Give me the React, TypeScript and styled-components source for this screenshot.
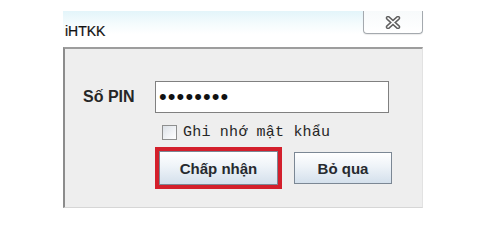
import React from "react"
import styled, { createGlobalStyle } from "styled-components"

const GlobalStyle = createGlobalStyle`
  html, body {
    margin: 0;
    padding: 0;
    background: #ffffff;
  }
  body {
    font-family: "Liberation Sans", Arial, sans-serif;
  }
`

const Window = styled.div`
  margin: 11px 0 0 63px;
  width: 360px;
`

const TitleBar = styled.div`
  height: 36px;
  display: flex;
  align-items: flex-start;
  justify-content: space-between;
  background: linear-gradient(180deg, #e3f5fa 0%, #f4fbfd 35%, #ffffff 65%);
`

const Title = styled.span`
  margin: 13px 0 0 2px;
  font-size: 14px;
  line-height: 14px;
  color: #111111;
  -webkit-text-stroke: 0.2px #111111;
`

const CloseButton = styled.div`
  width: 58px;
  height: 22px;
  display: flex;
  align-items: center;
  justify-content: center;
  border: 1px solid #a4a9ae;
  border-top: none;
  border-radius: 0 0 4px 4px;
  background: linear-gradient(180deg, #f7fafb 0%, #ffffff 100%);
  box-shadow: 0 1px 1px rgba(0, 0, 0, 0.08);
`

const Panel = styled.div`
  height: 161px;
  box-sizing: border-box;
  background: #eeeeee;
  border-top: 2px solid #9d9d9d;
  border-left: 2px solid #8c8c8c;
  border-right: 1px solid #e2e2e2;
  border-bottom: 1px solid #d6d6d6;
  padding: 32px 0 0 18px;
  display: flex;
  flex-direction: column;
`

const FieldRow = styled.div`
  display: flex;
  align-items: center;
`

const Label = styled.span`
  width: 72px;
  font-size: 16px;
  font-weight: bold;
  color: #262626;
`

const PinBox = styled.div`
  width: 234px;
  height: 32px;
  box-sizing: border-box;
  border: 1px solid #808080;
  background: #ffffff;
  display: flex;
  align-items: center;
  padding-left: 3px;
`

const Bullets = styled.span`
  font-size: 22px;
  line-height: 22px;
  letter-spacing: 1.1px;
  color: #111111;
  margin-top: -1px;
`

const CheckRow = styled.div`
  display: flex;
  align-items: center;
  margin: 12px 0 0 79px;
  height: 15px;
`

const CheckBox = styled.span`
  width: 15px;
  height: 15px;
  box-sizing: border-box;
  border: 1px solid #8e8f8f;
  background: linear-gradient(135deg, #dce1e7 0%, #f2f4f7 60%, #ffffff 100%);
  margin-right: 6px;
`

const CheckLabel = styled.span`
  font-family: "Liberation Mono", "Courier New", monospace;
  font-size: 15px;
  letter-spacing: 0.2px;
  color: #262626;
`

const ButtonRow = styled.div`
  display: flex;
  align-items: center;
  gap: 12px;
  margin: 7px 0 0 72px;
`

const FocusRing = styled.div`
  border: 4px solid #d31f2b;
  display: flex;
`

const Button = styled.div<{ $w: number; $h: number }>`
  width: ${({ $w }) => $w}px;
  height: ${({ $h }) => $h}px;
  box-sizing: border-box;
  display: flex;
  align-items: center;
  justify-content: center;
  border: 1px solid #7b8794;
  background: linear-gradient(180deg, #ffffff 0%, #eef3f8 45%, #d4e0ec 100%);
  font-size: 15px;
  font-weight: bold;
  color: #262a2f;
`

const CloseIcon = () => (
  <svg width="16" height="13" viewBox="0 0 16 13">
    <path d="M3 2 L13 11 M13 2 L3 11" stroke="#5f5f5f" strokeWidth="4.4" strokeLinecap="round" />
    <path d="M3 2 L13 11 M13 2 L3 11" stroke="#ffffff" strokeWidth="1.6" strokeLinecap="round" />
  </svg>
)

const App = () => (
  <>
    <GlobalStyle />
    <Window>
      <TitleBar>
        <Title>iHTKK</Title>
        <CloseButton>
          <CloseIcon />
        </CloseButton>
      </TitleBar>
      <Panel>
        <FieldRow>
          <Label>Số PIN</Label>
          <PinBox>
            <Bullets>••••••••</Bullets>
          </PinBox>
        </FieldRow>
        <CheckRow>
          <CheckBox />
          <CheckLabel>Ghi nhớ mật khẩu</CheckLabel>
        </CheckRow>
        <ButtonRow>
          <FocusRing>
            <Button $w={119} $h={34}>Chấp nhận</Button>
          </FocusRing>
          <Button $w={98} $h={32}>Bỏ qua</Button>
        </ButtonRow>
      </Panel>
    </Window>
  </>
)

export default App
